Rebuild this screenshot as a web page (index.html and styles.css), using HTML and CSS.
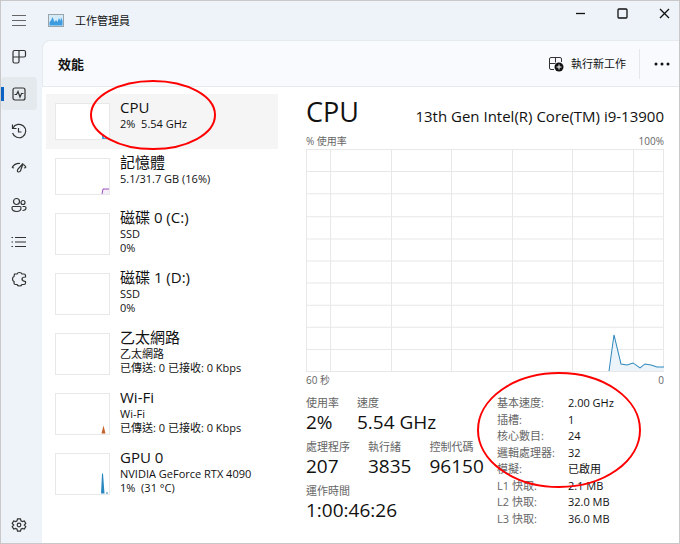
FILE: index.html
```
<!DOCTYPE html>
<html lang="zh-Hant">
<head>
    <meta charset="UTF-8">
    <meta name="viewport" content="width=device-width, initial-scale=1.0">
    <title>工作管理員</title>
    <link rel="stylesheet" href="styles.css">
</head>
<body>

    <div class="window">
        <nav class="sidebar">
            <button class="nav-button menu" aria-label="選單">
                <svg width="16" height="16" viewBox="0 0 16 16"><path d="M1 3.500h14M1 8.500h14M1 13.500h14"/></svg>
            </button>
            <button class="nav-button" aria-label="處理程序">
                <svg width="16" height="16" viewBox="0 0 16 16"><path d="M3.500 1.500h9.500q1.500 0 1.500 1.500v3.500q0 1.500-1.500 1.500H2M8 1.500v11q0 1.500-1.500 1.500H3.500Q2 14 2 12.500V3q0-1.500 1.500-1.500z"/></svg>
            </button>
            <button class="nav-button active" aria-label="效能">
                <svg width="16" height="16" viewBox="0 0 16 16"><rect x="2" y="2" width="12" height="12" rx="2"/><path d="M3.500 8.500h2l1.500-3 2 5.500 1.500-3.500h2"/></svg>
            </button>
            <button class="nav-button" aria-label="應用程式歷程記錄">
                <svg width="16" height="16" viewBox="0 0 16 16"><path d="M2 5a6.700 6.700 0 1 1-.4 5M1.500 1.500V5.500h4M7.500 5v4h3"/></svg>
            </button>
            <button class="nav-button" aria-label="開機應用程式">
                <svg width="16" height="16" viewBox="0 0 16 16"><path d="M1 7.500Q4 3 9 3.500M12.500 4.500Q14.500 6 15 7.500M1 7.500l2 .5M15 7.500l-2 .5M12 3.500L7 9Q5.500 12 7.500 12 9.500 12 10 9.500L12 3.500z"/></svg>
            </button>
            <button class="nav-button" aria-label="使用者">
                <svg width="16" height="16" viewBox="0 0 16 16"><circle cx="5.500" cy="4.500" r="3"/><circle cx="12" cy="5.500" r="2"/><path d="M2 9.500h7q1 0 1 1.200 0 3.800-4.500 3.800T1 10.700q0-1.200 1-1.200zM11.500 9.500h2q1.500 0 1.500 1.300 0 2.700-3.500 2.700"/></svg>
            </button>
            <button class="nav-button" aria-label="詳細資料">
                <svg width="16" height="16" viewBox="0 0 16 16"><path d="M4 3.500h11M4 8h11M4 12.500h11M.5 3.500h1.500M.5 8h1.500M.5 12.500h1.500"/></svg>
            </button>
            <button class="nav-button" aria-label="服務">
                <svg width="16" height="16" viewBox="0 0 16 16"><path d="M3.500 3H6Q6.500 1.500 8.500 1.500T11 3h2q1.500 0 1.500 1.500V6Q11 6 11 8t3.500 2.500V12q0 1.500-1.500 1.500h-2Q10.500 15 8.500 15T6 13.500H4.500Q3 13.500 3 12v-1.500Q1.500 10 1.500 8T3 5.500z"/></svg>
            </button>
            <button class="nav-button settings" aria-label="設定">
                <svg width="16" height="16" viewBox="0 0 16 16"><path d="M6.500 1.800h3l.5 2 1.300.7 2-.6 1.500 2.600L13.300 8l1.500 1.500-1.500 2.600-2-.6-1.300.7-.5 2h-3l-.5-2-1.300-.7-2 .6-1.500-2.600L2.700 8 1.200 6.500l1.500-2.600 2 .6L6 3.800z"/><circle cx="8" cy="8" r="1.800"/></svg>
            </button>
        </nav>

        <div class="page">
            <div class="titlebar">
                <svg width="16" height="13" viewBox="0 0 16 13"><rect x=".5" y=".5" width="15" height="12" fill="#d3ebf8" stroke="#9aa4ab"/><path d="M1.500 11.500V8L3 6.500 4.500 3l2 5L8 6l1.500 2 1.500-4 1.500 3L13 3.500l1.500 3v5z" fill="#3d9ce0" stroke="none"/></svg>
                <span class="app-name">工作管理員</span>
                <div class="window-buttons">
                    <button aria-label="最小化"><svg width="11" height="11" viewBox="0 0 11 11"><path d="M1 5.500h9"/></svg></button>
                    <button aria-label="最大化"><svg width="11" height="11" viewBox="0 0 11 11"><rect x="1" y="1" width="9" height="9" rx="1"/></svg></button>
                    <button aria-label="關閉"><svg width="11" height="11" viewBox="0 0 11 11"><path d="M1 1l9 9M10 1l-9 9"/></svg></button>
                </div>
            </div>

            <div class="toolbar">
                <h1>效能</h1>
                <button class="run-task">
                    <svg width="16" height="16" viewBox="0 0 16 16"><path d="M13.500 6V3q0-1.500-1.500-1.500H3Q1.500 1.500 1.500 3v9q0 1.500 1.500 1.500h3M1.500 7.500h6M7.500 1.500v5"/><circle cx="11" cy="11" r="4.500" fill="#111" stroke="none"/><path d="M8.500 11h5M11 8.500v5" stroke="#fff"/></svg>
                    執行新工作
                </button>
                <button class="more" aria-label="更多">
                    <svg width="16" height="4" viewBox="0 0 16 4"><g fill="#111" stroke="none"><circle cx="2" cy="2" r="1.500"/><circle cx="8" cy="2" r="1.500"/><circle cx="14" cy="2" r="1.500"/></g></svg>
                </button>
            </div>

            <div class="content">
                <ul class="device-list">
                    <li class="selected">
                        <button class="device">
                            <svg class="thumb short" viewBox="0 0 53 35"><path d="M46 35v-4h2v3h4v1z" fill="#4a9fd0" stroke="none"/></svg>
                            <span class="device-text"><span class="device-name">CPU</span><span>2%&nbsp; 5.54 GHz</span></span>
                        </button>
                        <svg class="mark" viewBox="0 0 128 72"><ellipse cx="64" cy="36" rx="62" ry="34"/></svg>
                    </li>
                    <li>
                        <button class="device">
                            <svg class="thumb short" viewBox="0 0 53 35"><path d="M46 35l1-5h6v5z" fill="#f5f0f8" stroke="none"/><path d="M46 35l1-5h6" stroke="#9b4fc0"/></svg>
                            <span class="device-text"><span class="device-name">記憶體</span><span>5.1/31.7 GB (16%)</span></span>
                        </button>
                    </li>
                    <li>
                        <button class="device">
                            <svg class="thumb" viewBox="0 0 53 39"></svg>
                            <span class="device-text"><span class="device-name">磁碟 0 (C:)</span><span>SSD</span><span>0%</span></span>
                        </button>
                    </li>
                    <li>
                        <button class="device">
                            <svg class="thumb" viewBox="0 0 53 39"></svg>
                            <span class="device-text"><span class="device-name">磁碟 1 (D:)</span><span>SSD</span><span>0%</span></span>
                        </button>
                    </li>
                    <li>
                        <button class="device">
                            <svg class="thumb" viewBox="0 0 53 39"></svg>
                            <span class="device-text"><span class="device-name">乙太網路</span><span>乙太網路</span><span>已傳送: 0 已接收: 0 Kbps</span></span>
                        </button>
                    </li>
                    <li>
                        <button class="device">
                            <svg class="thumb" viewBox="0 0 53 39"><path d="M45.500 39l2-8 2 8z" fill="#c4622d" stroke="none"/></svg>
                            <span class="device-text"><span class="device-name">Wi-Fi</span><span>Wi-Fi</span><span>已傳送: 0 已接收: 0 Kbps</span></span>
                        </button>
                    </li>
                    <li>
                        <button class="device">
                            <svg class="thumb" viewBox="0 0 53 39"><path d="M45 39l1-20h1l1.500 20zM50 39v-1h2v1z" fill="#2a88c0" stroke="none"/></svg>
                            <span class="device-text"><span class="device-name">GPU 0</span><span>NVIDIA GeForce RTX 4090</span><span>1%&nbsp; (31 °C)</span></span>
                        </button>
                    </li>
                </ul>

                <main class="details">
                    <div class="details-head">
                        <h2>CPU</h2>
                        <span class="model">13th Gen Intel(R) Core(TM) i9-13900</span>
                    </div>
                    <div class="axis"><span>% 使用率</span><span>100%</span></div>
                    <svg class="chart" viewBox="0 0 358 222" preserveAspectRatio="none">
                        <path class="grid" d="M24.500 0v222M85.500 0v222M145.500 0v222M206.500 0v222M266.500 0v222M327.500 0v222M0 22.500h358M0 44.500h358M0 67.500h358M0 89.500h358M0 111.500h358M0 133.500h358M0 155.500h358M0 177.500h358M0 199.500h358"/>
                        <rect class="grid" x=".5" y=".5" width="357" height="221"/>
                        <path class="area" d="M303 221l5-36 7 29 6 1 6-2 7 5 5-4 6 1 6 2h7v4z"/>
                        <path class="line" d="M303 221l5-36 7 29 6 1 6-2 7 5 5-4 6 1 6 2h7"/>
                    </svg>
                    <div class="axis"><span>60 秒</span><span>0</span></div>

                    <div class="stats">
                        <div class="live">
                            <dl class="stat-row">
                                <div><dt>使用率</dt><dd>2%</dd></div>
                                <div><dt>速度</dt><dd>5.54 GHz</dd></div>
                            </dl>
                            <dl class="stat-row">
                                <div><dt>處理程序</dt><dd>207</dd></div>
                                <div><dt>執行緒</dt><dd>3835</dd></div>
                                <div><dt>控制代碼</dt><dd>96150</dd></div>
                            </dl>
                            <dl class="stat-row">
                                <div><dt>運作時間</dt><dd>1:00:46:26</dd></div>
                            </dl>
                        </div>
                        <div class="specs-box">
                            <dl class="specs">
                                <dt>基本速度:</dt><dd>2.00 GHz</dd>
                                <dt>插槽:</dt><dd>1</dd>
                                <dt>核心數目:</dt><dd>24</dd>
                                <dt>邏輯處理器:</dt><dd>32</dd>
                                <dt>模擬:</dt><dd>已啟用</dd>
                                <dt>L1 快取:</dt><dd>2.1 MB</dd>
                                <dt>L2 快取:</dt><dd>32.0 MB</dd>
                                <dt>L3 快取:</dt><dd>36.0 MB</dd>
                            </dl>
                            <svg class="mark" viewBox="0 0 164 118"><ellipse cx="82" cy="59" rx="81" ry="57"/></svg>
                        </div>
                    </div>
                </main>
            </div>
        </div>
    </div>

</body>
</html>
```
FILE: styles.css
```
* {
    box-sizing: border-box;
}
body {
    margin: 0;
    font-family: "Open Sans", "Noto Sans CJK TC", sans-serif;
    font-size: 11px;
    line-height: 14px;
    color: #111;
}
h1, h2, ul, dl, dd {
    margin: 0;
    padding: 0;
}
button {
    margin: 0;
    padding: 0;
    border: 0;
    background: none;
    font: inherit;
    color: inherit;
}
svg {
    display: block;
    flex: none;
    fill: none;
    stroke: #333;
}
.window {
    display: flex;
    min-height: 100vh;
    border: 1px solid #c8c8c8;
    background-color: #edf3f8;
}

/* left navigation */
.sidebar {
    display: flex;
    flex-direction: column;
    gap: 4px;
    width: 41px;
    padding: 2px 0;
}
.nav-button {
    display: flex;
    align-items: center;
    justify-content: center;
    width: 36px;
    height: 33px;
    border-radius: 4px;
}
.nav-button svg {
    stroke-width: 1.2;
}
.nav-button.menu svg {
    stroke: #666;
}
.nav-button.active {
    background-color: #e4e9ed;
    background-image: linear-gradient(#0a62c4, #0a62c4);
    background-repeat: no-repeat;
    background-size: 3px 14px;
    background-position: left center;
}
.settings {
    margin-top: auto;
}

.page {
    display: flex;
    flex: 1;
    flex-direction: column;
    min-width: 0;
}
.titlebar {
    display: flex;
    align-items: center;
    height: 39px;
    padding-left: 6px;
}
.app-name {
    margin-left: 11px;
}
.window-buttons {
    display: flex;
    align-self: flex-start;
    gap: 31px;
    margin-left: auto;
    padding: 7px 9px 0 0;
}
.window-buttons svg {
    stroke: #111;
    stroke-width: 1.3;
}

/* page header */
.toolbar {
    display: flex;
    align-items: center;
    height: 47px;
    padding: 0 9px 0 15px;
    border: solid #e4eaee;
    border-width: 1px 0 1px 1px;
    border-top-left-radius: 8px;
    background-color: #f8fafe;
}
.toolbar h1 {
    font-size: 13px;
    font-weight: 600;
}
.run-task {
    display: flex;
    align-items: center;
    gap: 7px;
    height: 30px;
    margin-left: auto;
    padding-right: 13px;
    border-right: 1px solid #e4e8ec;
}
.more {
    padding: 10px 0 10px 14px;
}
.content {
    display: flex;
    flex: 1;
    padding: 7px 15px 16px 4px;
    background-color: #fff;
}

/* device list */
.device-list {
    width: 232px;
    list-style: none;
}
.device-list li {
    position: relative;
}
.selected {
    background-color: #f5f5f5;
}
.device {
    display: flex;
    align-items: flex-start;
    width: 100%;
    padding: 3px 0 9px 9px;
    text-align: left;
}
.device-text {
    display: flex;
    flex-direction: column;
    margin-left: 10px;
    white-space: nowrap;
}
.device-name {
    font-size: 15px;
    line-height: 20px;
}
.thumb {
    width: 55px;
    height: 42px;
    margin-top: 6px;
    border: 1px solid #e8e8e8;
    background-color: #fff;
}
.thumb.short {
    height: 37px;
}
.mark {
    position: absolute;
    z-index: 1;
    top: -15px;
    left: 43px;
    width: 128px;
    height: 72px;
    stroke: #f00;
    stroke-width: 2;
    pointer-events: none;
}

/* cpu details */
.details {
    display: flex;
    flex: 1;
    flex-direction: column;
    min-width: 0;
    padding-left: 28px;
}
.details-head {
    display: flex;
    align-items: baseline;
    justify-content: space-between;
    margin-bottom: 3px;
    white-space: nowrap;
}
.details-head h2 {
    font-size: 27px;
    font-weight: 400;
    line-height: 36px;
}
.model {
    font-size: 15px;
    line-height: 18px;
}
.axis {
    display: flex;
    justify-content: space-between;
    font-size: 10px;
    line-height: 16px;
    color: #666;
}
.chart {
    flex: 1;
    width: 100%;
    height: 0;
    min-height: 222px;
}
.grid {
    stroke: #e8e8e8;
}
.area {
    fill: #edf4f9;
    stroke: none;
}
.line {
    stroke: #2f88bd;
}

.stats {
    display: flex;
    justify-content: space-between;
    margin-top: 7px;
    white-space: nowrap;
}
.stat-row {
    display: flex;
    gap: 18px;
    height: 44px;
}
.stats dt {
    line-height: 16px;
    color: #666;
}
.stat-row dd {
    font-size: 19px;
    line-height: 22px;
}
.specs-box {
    position: relative;
    width: 167px;
}
.specs {
    display: grid;
    grid-template-columns: 71px 1fr;
    grid-auto-rows: 1fr;
    height: 100%;
}
.specs dd {
    line-height: 16px;
}
.specs-box .mark {
    top: -24px;
    left: -20px;
    width: 164px;
    height: 118px;
}
```
